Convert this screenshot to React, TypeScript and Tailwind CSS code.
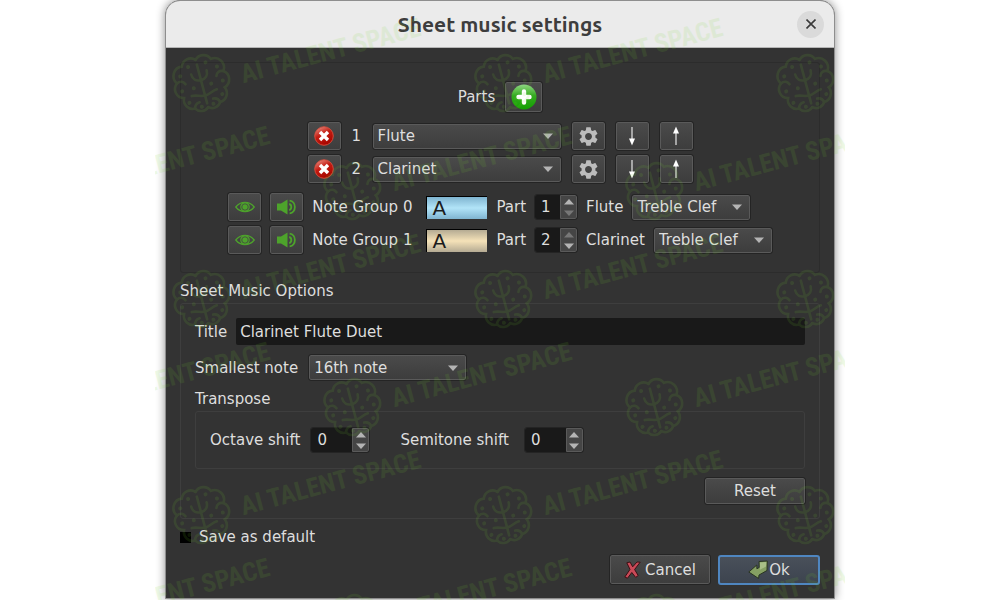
import React, { useState } from "react";
import { MdSettings } from "react-icons/md";

// --- types ---
type Part = { id: number; instrument: string };
type NoteGroup = { id: number; part: number; clef: string; swatch: string };

const INSTRUMENTS = ["Flute", "Clarinet", "Oboe", "Violin"];
const CLEFS = ["Treble Clef", "Alto Clef", "Bass Clef"];
const NOTES = ["4th note", "8th note", "16th note", "32nd note"];

const BLUE = "bg-linear-to-b from-[#7fb4d0] via-[#b2e4f8] to-[#7fb4d0]";
const SAND = "bg-linear-to-b from-[#b5ab93] via-[#f5e2b8] to-[#b5ab93]";

const RAISED =
  "border border-[#5a5a5a] rounded-[2px] outline outline-[#242424] bg-linear-to-b from-[#4a4a4a] to-[#3d3d3d]";

// --- icons ---
const PlusIcon = () => (
  <svg width="26" height="26" viewBox="0 0 26 26" aria-hidden="true">
    <defs>
      <linearGradient id="plus" x1="0" y1="0" x2="0" y2="1">
        <stop offset="0" stopColor="#8fd684" />
        <stop offset="0.45" stopColor="#35ab20" />
        <stop offset="1" stopColor="#12a000" />
      </linearGradient>
    </defs>
    <circle cx="13" cy="13" r="12.5" fill="url(#plus)" />
    <path d="M13 7.500v11M7.500 13h11" stroke="#fff" strokeWidth="4.4" strokeLinecap="round" />
  </svg>
);

const RemoveIcon = () => (
  <svg width="20" height="20" viewBox="0 0 20 20" aria-hidden="true">
    <defs>
      <linearGradient id="remove" x1="0" y1="0" x2="0.5" y2="1">
        <stop offset="0" stopColor="#f0a297" />
        <stop offset="0.5" stopColor="#c41c12" />
        <stop offset="1" stopColor="#a80600" />
      </linearGradient>
    </defs>
    <circle cx="10" cy="10" r="9.3" fill="url(#remove)" stroke="#d8503f" strokeWidth="0.9" />
    <path d="M6 6l8 8M14 6l-8 8" stroke="#fff" strokeWidth="3.4" />
  </svg>
);

const EyeIcon = () => (
  <svg width="20" height="14" viewBox="0 0 20 14" fill="none" stroke="#4da32b" aria-hidden="true">
    <path d="M.8 7C5.500.9 14.500.9 19.200 7 14.500 13.100 5.500 13.100.8 7z" strokeWidth="1.3" />
    <circle cx="10" cy="7" r="4.2" strokeWidth="1.2" />
    <circle cx="10" cy="7" r="2.7" fill="#4da32b" stroke="none" />
  </svg>
);

const SpeakerIcon = () => (
  <svg width="20" height="18" viewBox="0 0 20 18" fill="none" aria-hidden="true">
    <path d="M0 5.500h4L10.500 1.500v15L4 12.500H0z" fill="#4da32b" />
    <path d="M12.200 6c2.800.6 2.800 5.400 0 6M12.600 2.600c7 .8 7 12 0 12.800" stroke="#4da32b" strokeWidth="1.8" />
  </svg>
);

const ArrowIcon = ({ up }: { up?: boolean }) => (
  <svg width="8" height="20" viewBox="0 0 8 20" className={up ? "rotate-180" : ""} aria-hidden="true">
    <path d="M4 1v14" stroke="#e8e8e8" strokeWidth="1.2" />
    <path d="M1 12.500h6L4 19.500z" fill="#fff" />
  </svg>
);

const CrossIcon = () => (
  <svg width="17" height="18" viewBox="0 0 17 18" aria-hidden="true">
    <path
      d="M2.800 1.800L6 1l2.700 4.800L13 1l3.200.2L10.600 8.500l3.600 6-2.500 1.900-3.900-4.900-4.300 5.700-2.700-1.200 5.200-7.600z"
      fill="#c94a58"
      stroke="#3b1014"
      strokeLinejoin="round"
    />
  </svg>
);

const ReturnIcon = () => (
  <svg width="20" height="20" viewBox="0 0 20 20" aria-hidden="true">
    <path
      d="M11 1.500L19.300 1l-.3 9.500-8 4.500-.4 3.500L.8 12l8-7 .1 3.800 2.300-1.300z"
      fill="#86a063"
      stroke="#2a3522"
      strokeLinejoin="round"
    />
    <path d="M12 2.500l6.200-.4-.2 4.400-6 3.200z" fill="#a9bf87" />
  </svg>
);

const Triangle = ({ up, dim }: { up?: boolean; dim?: boolean }) => (
  <svg width="10" height="6" viewBox="0 0 10 6" aria-hidden="true">
    <path d={up ? "M0 5.500L5 0l5 5.500z" : "M0 .5h10L5 6z"} fill={dim ? "#777" : "#b4b4b4"} />
  </svg>
);

// --- controls ---
function IconButton({ label, className = "h-7 w-[33px]", children }: { label: string; className?: string; children: React.ReactNode }) {
  return (
    <button aria-label={label} className={`flex shrink-0 items-center justify-center ${RAISED} ${className}`}>
      {children}
    </button>
  );
}

function Combo({ id, label, value, options, width }: { id?: string; label?: string; value: string; options: string[]; width: string }) {
  const [current, setCurrent] = useState(value);
  return (
    <div className={`relative shrink-0 ${width}`}>
      <select
        id={id}
        aria-label={label}
        value={current}
        onChange={(e) => setCurrent(e.target.value)}
        className={`block h-[25px] w-full appearance-none pl-1 leading-5 ${RAISED}`}
      >
        {options.map((o) => (
          <option key={o}>{o}</option>
        ))}
      </select>
      <span className="pointer-events-none absolute inset-y-0 right-2 flex items-center">
        <Triangle />
      </span>
    </div>
  );
}

type SpinProps = { id?: string; label?: string; value: number; min: number; max: number; width: string };

function Spin({ id, label, value, min, max, width }: SpinProps) {
  const [n, setN] = useState(value);
  return (
    <div className={`flex h-6 shrink-0 rounded-[2px] bg-[#191919] outline outline-[#242424] ${width}`}>
      <input id={id} aria-label={label} value={n} readOnly inputMode="numeric" className="w-0 flex-1 pl-[6px] outline-none" />
      <div className="flex w-[17px] flex-col rounded-r-[2px] border border-[#5a5a5a] bg-[#454545]">
        <button aria-label="Increase" onClick={() => setN(Math.min(max, n + 1))} className="flex flex-1 items-center justify-center">
          <Triangle up dim={n >= max} />
        </button>
        <button aria-label="Decrease" onClick={() => setN(Math.max(min, n - 1))} className="flex flex-1 items-center justify-center">
          <Triangle dim={n <= min} />
        </button>
      </div>
    </div>
  );
}

// --- watermark ---
const HALF = "M0-25A9 9 0 0 0-15-22A9.500 9.500 0 0 0-24-7A9 9 0 0 0-21 9A9 9 0 0 0-13 22A8.500 8.500 0 0 0 0 24";

function Watermark() {
  const marks: { x: number; y: number }[] = [];
  for (let row = 0; row < 6; row++) {
    for (let col = -1; col < 3; col++) {
      const x = 47 + col * 302 + (row % 2) * 151;
      if (x > -120 && x < 700) marks.push({ x, y: 84 + row * 108 });
    }
  }
  return (
    <svg className="pointer-events-none absolute inset-0 h-full w-full opacity-[0.11]" aria-hidden="true">
      <defs>
        <g id="brain" fill="none" stroke="#77d82c" strokeWidth="2.6" strokeLinecap="round">
          {[1, -1].map((side) => (
            <g key={side} transform={`scale(${side} 1)`}>
              <path d={HALF} />
              <path d="M0-4C-5-4-8-7-8-12M0 12C-5 12-8 9-13 9M-24-7C-20-9-17-7-16-4M-13 22C-12 18-10 17-7 17" />
              <g fill="#77d82c" stroke="none">
                <circle cx="-9" cy="-20" r="2" />
                <circle cx="-19" cy="-13" r="2" />
                <circle cx="-21" cy="2" r="2" />
                <circle cx="-9" cy="2" r="2" />
                <circle cx="-17" cy="15" r="2" />
                <circle cx="-6" cy="22" r="2" />
              </g>
            </g>
          ))}
          <path d="M0-20V20" />
        </g>
      </defs>
      {marks.map((m) => (
        <g key={`${m.x}-${m.y}`} transform={`translate(${m.x} ${m.y}) rotate(-15)`}>
          <use href="#brain" />
          {m.x < 640 && (
            <text x="40" y="10" fill="#77d82c" className="font-['Roboto_Condensed','Roboto',sans-serif] text-[26px] font-bold">
              AI TALENT SPACE
            </text>
          )}
        </g>
      ))}
    </svg>
  );
}

export default function App() {
  const [parts] = useState<Part[]>([
    { id: 1, instrument: "Flute" },
    { id: 2, instrument: "Clarinet" },
  ]);
  const [groups] = useState<NoteGroup[]>([
    { id: 0, part: 1, clef: "Treble Clef", swatch: BLUE },
    { id: 1, part: 2, clef: "Treble Clef", swatch: SAND },
  ]);
  const [title, setTitle] = useState("Clarinet Flute Duet");

  return (
    <div className="min-h-screen bg-white">
      <div className="relative mx-auto w-full max-w-[690px] overflow-hidden px-[10px] pb-[2px] font-['DejaVu_Sans',sans-serif] text-[15px] leading-5 text-[#dedede]">
        <main className="overflow-hidden rounded-t-[15px] border border-[#8e8e8e] bg-[#333333] shadow-[0_0_10px_rgba(0,0,0,0.45)]">
          <header className="flex h-[47px] items-center border-b border-[#b5b5b5] bg-[#ebebeb] px-[10px]">
            <span className="w-[27px]" />
            <h1 className="flex-1 text-center font-['Ubuntu','Noto_Sans',sans-serif] text-[21px] leading-6 font-bold text-[#3d3d3d]">
              Sheet music settings
            </h1>
            <button aria-label="Close" className="flex h-[27px] w-[27px] items-center justify-center rounded-full bg-[#dadada]">
              <svg width="10" height="10" viewBox="0 0 10 10" stroke="#3a3a3a" strokeWidth="1.6" aria-hidden="true">
                <path d="M.5.5l9 9M9.500.5l-9 9" />
              </svg>
            </button>
          </header>

          <div className="flex flex-col px-[14px] pt-[14px] pb-[13px]">
            <section className="flex flex-col items-center rounded-[3px] border border-[#2c2c2c] pt-[19px] pb-[18px]">
              <div className="flex items-center gap-[10px]">
                <span>Parts</span>
                <IconButton label="Add part" className="h-[30px] w-[37px]">
                  <PlusIcon />
                </IconButton>
              </div>

              <div className="mt-[10px] flex flex-col gap-[5px]">
                {parts.map((p) => (
                  <div key={p.id} className="flex items-center gap-[11px]">
                    <IconButton label={`Remove part ${p.id}`}>
                      <RemoveIcon />
                    </IconButton>
                    <span className="w-[10px]">{p.id}</span>
                    <Combo label={`Instrument ${p.id}`} value={p.instrument} options={INSTRUMENTS} width="w-[188px]" />
                    <IconButton label="Part settings">
                      <MdSettings size={23} color="#bcbcbc" />
                    </IconButton>
                    <IconButton label="Move down">
                      <ArrowIcon />
                    </IconButton>
                    <IconButton label="Move up">
                      <ArrowIcon up />
                    </IconButton>
                  </div>
                ))}
              </div>

              <div className="mt-[10px] flex flex-col gap-[5px]">
                {groups.map((g) => (
                  <div key={g.id} className="flex items-center gap-[9px]">
                    <IconButton label="Toggle visibility">
                      <EyeIcon />
                    </IconButton>
                    <IconButton label="Toggle sound">
                      <SpeakerIcon />
                    </IconButton>
                    <span>Note Group {g.id}</span>
                    <button
                      aria-label={`Colour of note group ${g.id}`}
                      className={`ml-[5px] h-[23px] w-[61px] border-t border-l border-black pl-[5px] text-left text-[20px] leading-5 text-[#1c1c1c] ${g.swatch}`}
                    >
                      A
                    </button>
                    <span>Part</span>
                    <Spin label={`Part of note group ${g.id}`} value={g.part} min={1} max={2} width="w-[42px]" />
                    <span>{parts[g.part - 1].instrument}</span>
                    <Combo label={`Clef of note group ${g.id}`} value={g.clef} options={CLEFS} width="w-[118px]" />
                  </div>
                ))}
              </div>
            </section>

            <h2 className="mt-2">Sheet Music Options</h2>
            <section className="mt-[2px] flex flex-col rounded-[3px] border border-[#3e3e3e] p-[14px]">
              <div className="flex items-center gap-[9px]">
                <label htmlFor="title">Title</label>
                <input
                  id="title"
                  value={title}
                  onChange={(e) => setTitle(e.target.value)}
                  className="h-[27px] flex-1 rounded-[2px] bg-[#191919] px-1 outline-none"
                />
              </div>
              <div className="mt-[10px] flex items-center gap-[11px]">
                <label htmlFor="smallest">Smallest note</label>
                <Combo id="smallest" value="16th note" options={NOTES} width="w-[157px]" />
              </div>
              <h3 className="mt-[9px]">Transpose</h3>
              <div className="mt-[2px] flex items-center rounded-[3px] border border-[#3e3e3e] px-[14px] py-4">
                <label htmlFor="octave" className="mr-[11px]">Octave shift</label>
                <Spin id="octave" value={0} min={-9} max={9} width="w-[58px]" />
                <label htmlFor="semitone" className="mr-4 ml-[31px]">Semitone shift</label>
                <Spin id="semitone" value={0} min={-12} max={12} width="w-[58px]" />
              </div>
              <button className={`mt-[9px] h-[26px] w-[100px] self-end ${RAISED}`}>Reset</button>
            </section>

            <label className="mt-2 flex items-center gap-2 self-start">
              <input type="checkbox" className="h-[11px] w-[11px] appearance-none bg-black checked:bg-[#5294e2]" />
              Save as default
            </label>

            <div className="mt-2 flex justify-end gap-2">
              <button className={`flex h-[29px] w-[100px] items-center justify-center gap-1 ${RAISED}`}>
                <CrossIcon />
                Cancel
              </button>
              <button className="flex h-[30px] w-[102px] items-center justify-center gap-px rounded-[3px] border-2 border-[#4f86c0] bg-linear-to-b from-[#49505a] to-[#3d444f]">
                <ReturnIcon />
                Ok
              </button>
            </div>
          </div>
        </main>
        <Watermark />
      </div>
    </div>
  );
}
